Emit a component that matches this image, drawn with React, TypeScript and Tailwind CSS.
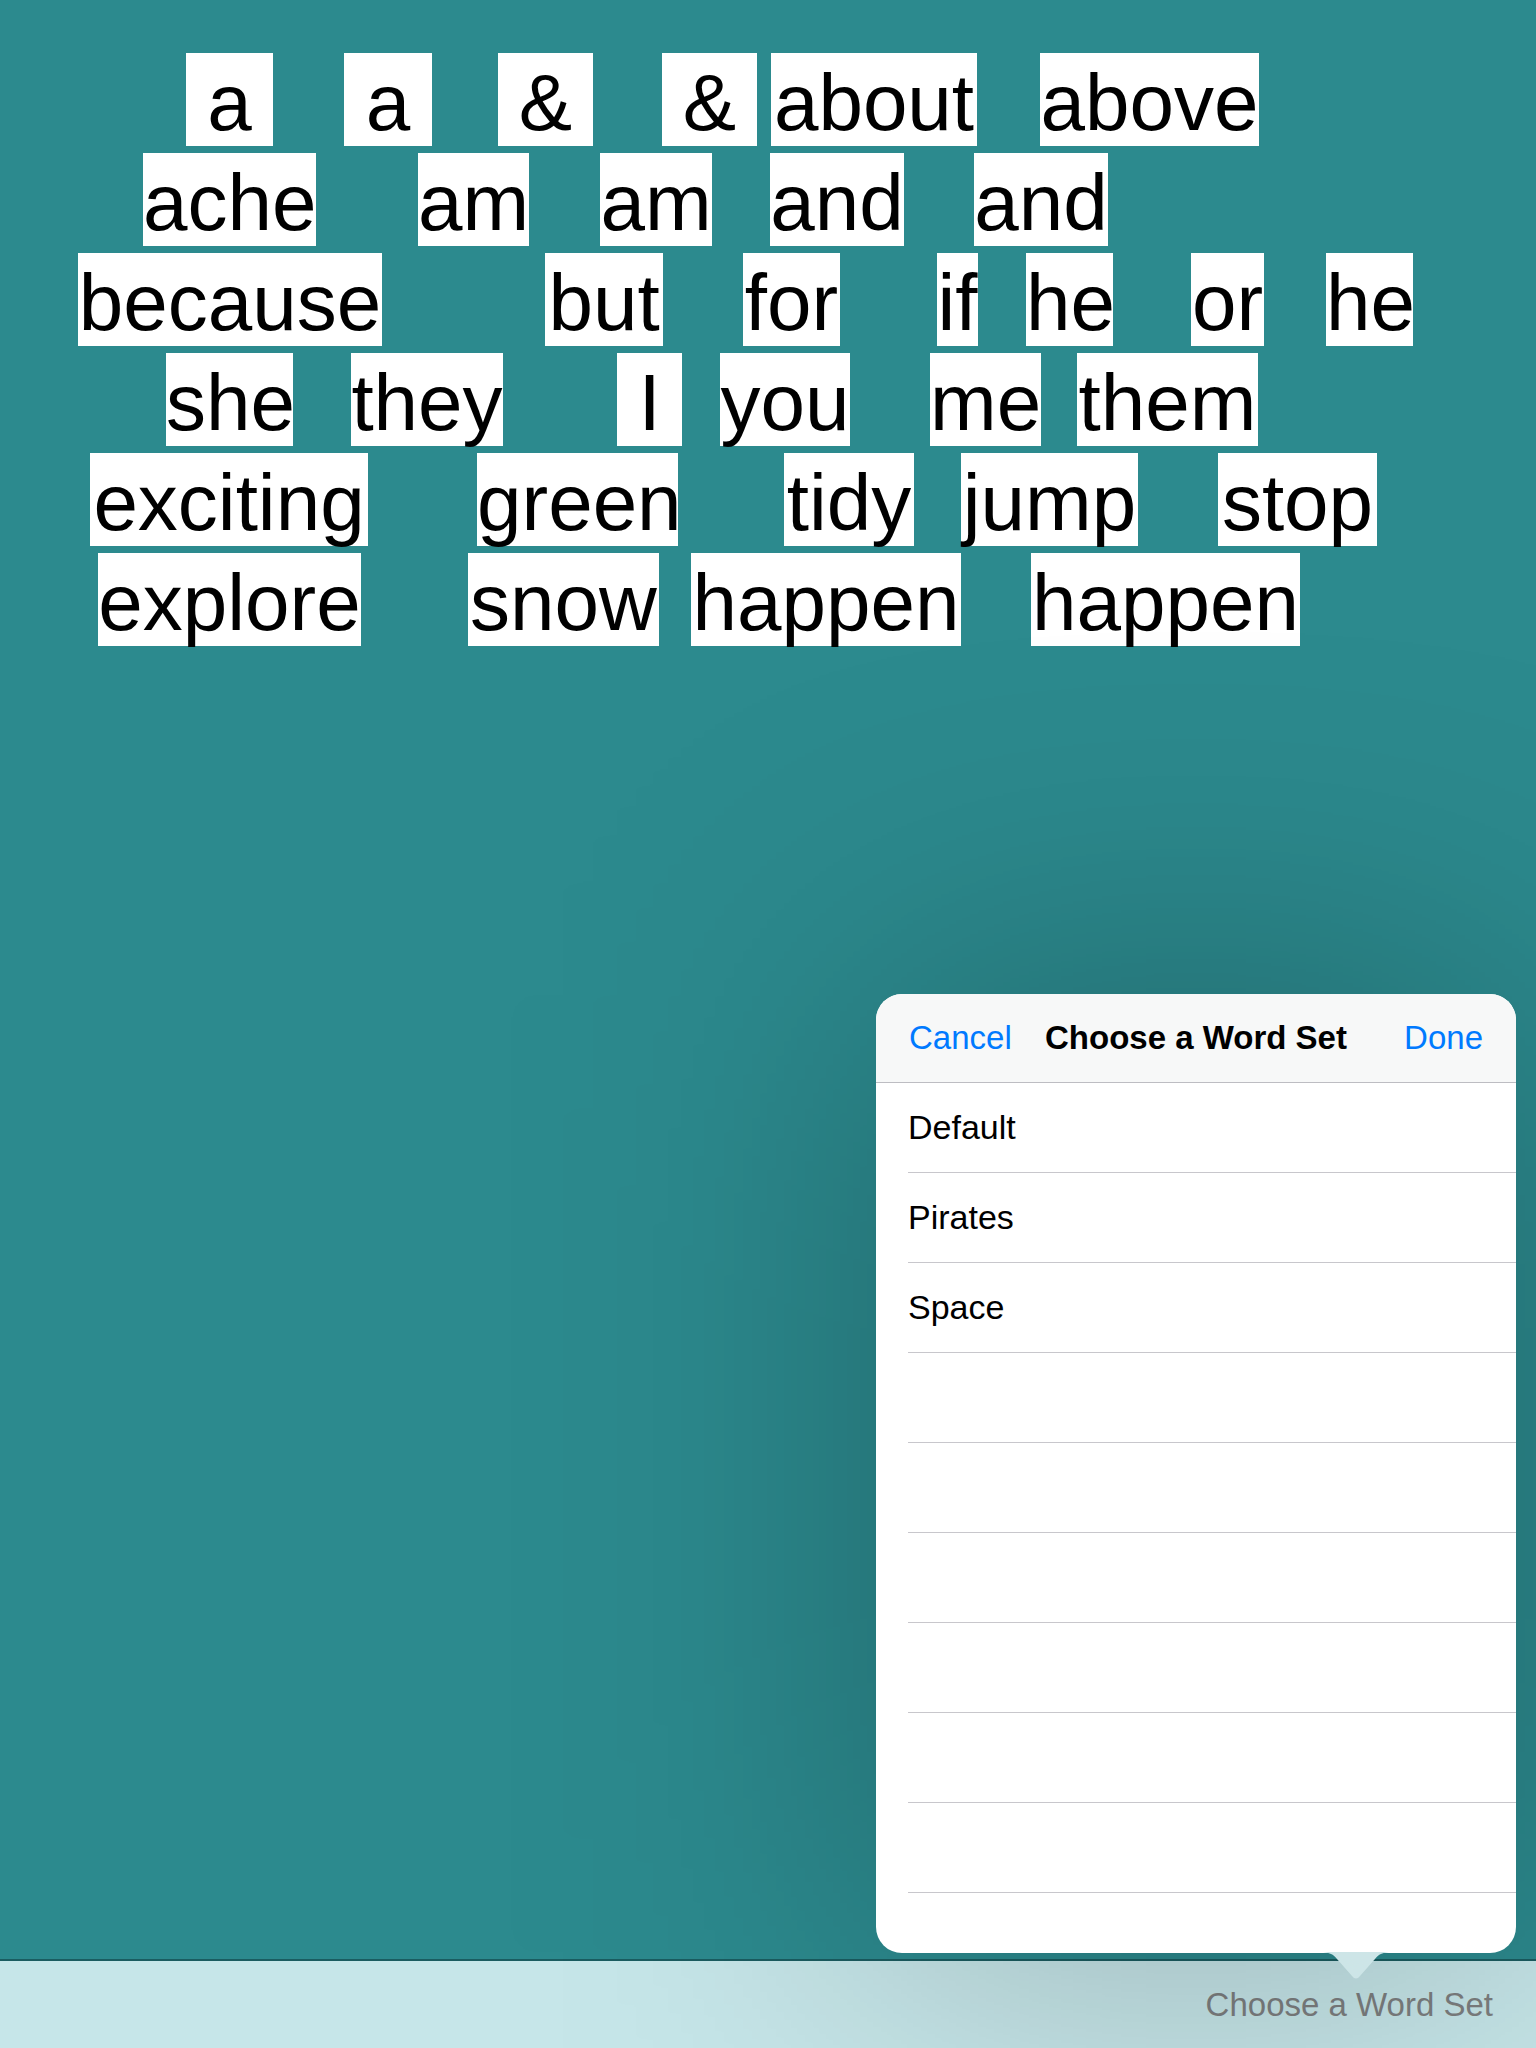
import React from 'react';

type Tile = [string, number, number]; // text, left, width

const rows: Tile[][] = [
    [['a', 186, 87], ['a', 344, 88], ['&', 498, 95], ['&', 662, 95], ['about', 771, 206], ['above', 1040, 219]],
    [['ache', 143, 173], ['am', 418, 111], ['am', 600, 112], ['and', 770, 134], ['and', 974, 134]],
    [['because', 78, 304], ['but', 545, 118], ['for', 743, 97], ['if', 937, 41], ['he', 1026, 87], ['or', 1191, 73], ['he', 1326, 87]],
    [['she', 166, 127], ['they', 351, 152], ['I', 617, 65], ['you', 720, 130], ['me', 930, 111], ['them', 1077, 181]],
    [['exciting', 90, 278], ['green', 477, 201], ['tidy', 784, 130], ['jump', 961, 177], ['stop', 1218, 159]],
    [['explore', 98, 263], ['snow', 468, 191], ['happen', 691, 270], ['happen', 1031, 269]],
];

const wordSets = ['Default', 'Pirates', 'Space', '', '', '', '', '', ''];

function WordTile({ text, left, width }: { text: string; left: number; width: number }) {
    return (
        <div
            className="absolute top-0 h-[93px] bg-white text-black text-[80px] leading-[99px] text-center whitespace-nowrap"
            style={{ left, width }}
        >
            {text}
        </div>
    );
}

function WordSetPopover() {
    return (
        <div className="absolute left-[876px] top-[994px] z-10 w-[640px] h-[959px]">
            {/* soft shadow, blurred so it fades smoothly over the canvas and toolbar */}
            <div className="absolute inset-0 rounded-[26px] bg-black/25 blur-[170px]" />

            <div className="relative h-full rounded-[26px] bg-white overflow-hidden">
                {/* Nav bar */}
                <div className="h-[89px] bg-[#f7f8f8] border-b border-[#bdbdc2] grid grid-cols-[1fr_auto_1fr] items-center px-[33px] text-[33px]">
                    <span className="text-[#007aff]">Cancel</span>
                    <span className="text-black font-bold">Choose a Word Set</span>
                    <span className="text-[#007aff] text-right">Done</span>
                </div>
                {/* Table */}
                <ul>
                    {wordSets.map((name, i) => (
                        <li key={i} className="pl-[32px]">
                            <div className="h-[90px] border-b border-[#c8c7cc] flex items-center text-[34px] text-black">
                                {name}
                            </div>
                        </li>
                    ))}
                </ul>
            </div>

            {/* Arrow */}
            <svg className="absolute left-[444px] top-[958px]" width="72" height="28" viewBox="0 0 72 28">
                <path d="M0 0 C9 0 13 2 17 7 L32 24 Q36 29 40 24 L55 7 C59 2 63 0 72 0 Z" fill="#cde5e7" />
            </svg>
        </div>
    );
}

export default function App() {
    return (
        <div className="relative w-[1536px] h-[2048px] overflow-hidden flex flex-col bg-[#2c8a8e] font-['Liberation_Sans',Arial,sans-serif]">
            {/* Word canvas */}
            <div className="flex-1 flex flex-col gap-[7px] pt-[53px]">
                {rows.map((row, r) => (
                    <div key={r} className="relative h-[93px]">
                        {row.map(([text, left, width], i) => (
                            <WordTile key={i} text={text} left={left} width={width} />
                        ))}
                    </div>
                ))}
            </div>

            {/* Bottom toolbar */}
            <div className="h-[89px] shrink-0 border-t-2 border-[#1b5d61] bg-[#c6e6e9] flex items-center justify-end pr-[43px] text-[33px] text-[#7d7f80]">
                Choose a Word Set
            </div>

            <WordSetPopover />
        </div>
    );
}
